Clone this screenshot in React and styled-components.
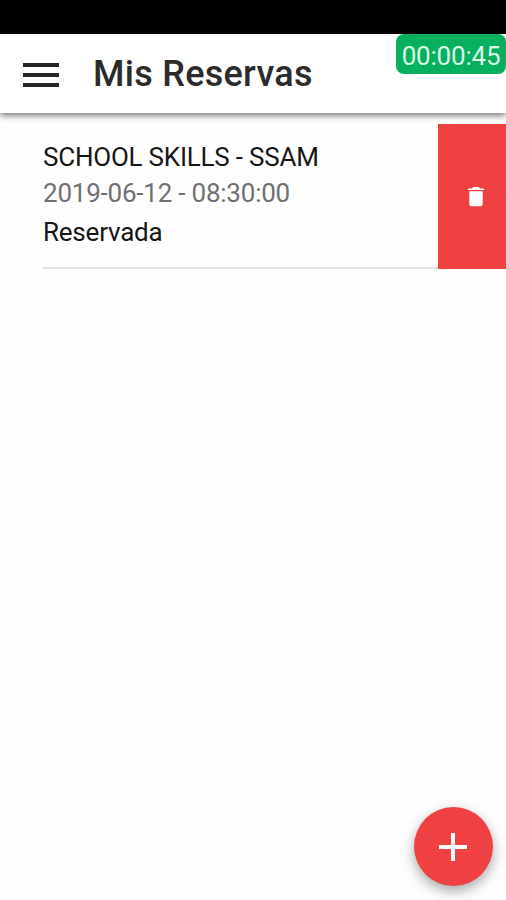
import React from 'react'
import styled, { createGlobalStyle } from 'styled-components';

function App() {
    return (
        <Screen>
            <GlobalStyle />
            <StatusBar />
            <Header>
                <MenuButton aria-label="Menu">
                    <span />
                    <span />
                    <span />
                </MenuButton>
                <Title>Mis Reservas</Title>
                <Timer>00:00:45</Timer>
            </Header>
            <List>
                <Item>
                    <ItemBody>
                        <Course>SCHOOL SKILLS - SSAM</Course>
                        <Schedule>2019-06-12 - 08:30:00</Schedule>
                        <Status>Reservada</Status>
                    </ItemBody>
                    <DeleteButton aria-label="Eliminar">
                        <svg width="18" height="21" viewBox="0 0 18 21" fill="#fff">
                            <path d="M1 2.4H4.5C5.4 2.1 5.8 1 7 1H11C12.2 1 12.6 2.1 13.5 2.4H17V4H1Z" />
                            <path d="M2.3 5.2H15.7V18.2Q15.7 20.2 13.7 20.2H4.3Q2.3 20.2 2.3 18.2Z" />
                        </svg>
                    </DeleteButton>
                </Item>
            </List>
            <AddButton aria-label="Agregar">
                <svg width="28" height="28" viewBox="0 0 28 28" fill="#fff">
                    <path d="M12 0H16V12H28V16H16V28H12V16H0V12H12Z" />
                </svg>
            </AddButton>
        </Screen>
    )
}

export default App

const GlobalStyle = createGlobalStyle`
    * {
        box-sizing: border-box;
    }

    body {
        margin: 0;
        background: #fefefe;
        font-family: Roboto, sans-serif;
    }

    button {
        border: 0;
        padding: 0;
        cursor: pointer;
    }
`
const Screen = styled.div`
    position: relative;
    height: 100vh;
    min-height: 900px;
    overflow: hidden;
    background: #fefefe;
`
const StatusBar = styled.div`
    height: 34px;
    background: #000;
`
const Header = styled.header`
    position: relative;
    display: flex;
    align-items: center;
    height: 79px;
    padding-left: 23px;
    background: #fff;
    box-shadow: 0 2px 7px rgba(0, 0, 0, 0.6);
`
const MenuButton = styled.button`
    display: flex;
    flex-direction: column;
    gap: 6px;
    width: 36px;
    margin-top: 3px;
    background: none;

    span {
        height: 4px;
        background: #262626;
    }
`
const Title = styled.h1`
    margin: 0 0 0 34px;
    color: #2b2b2b;
    font-size: 36px;
    font-weight: 500;
    letter-spacing: 0.28px;
    line-height: 42px;
    white-space: nowrap;
`
const Timer = styled.div`
    position: absolute;
    top: 0;
    right: 0;
    width: 110px;
    height: 40px;
    border-radius: 8px;
    background: #06b05f;
    color: #d9fbe8;
    font-size: 26px;
    letter-spacing: -0.2px;
    line-height: 45px;
    text-align: center;
`
const List = styled.main`
    padding-top: 11px;
`
const Item = styled.div`
    display: flex;
    height: 145px;
`
const ItemBody = styled.div`
    flex: 1;
    margin-left: 43px;
    padding-top: 17px;
    border-bottom: 2px solid #e4e4e4;
    font-size: 26px;
    letter-spacing: -0.22px;
    white-space: nowrap;
`
const Course = styled.div`
    color: #161616;
    line-height: 32px;
`
const Schedule = styled.div`
    margin-top: 4px;
    color: #707070;
    line-height: 32px;
`
const Status = styled.div`
    margin-top: 7px;
    color: #161616;
    line-height: 32px;
`
const DeleteButton = styled.button`
    display: flex;
    align-items: center;
    justify-content: center;
    width: 68px;
    padding-left: 8px;
    background: #ef4141;
`
const AddButton = styled.button`
    position: absolute;
    right: 13px;
    bottom: 14px;
    display: flex;
    align-items: center;
    justify-content: center;
    width: 79px;
    height: 79px;
    padding-right: 1px;
    border-radius: 50%;
    background: #ef4141;
    box-shadow: 0 5px 13px rgba(0, 0, 0, 0.35);
`
